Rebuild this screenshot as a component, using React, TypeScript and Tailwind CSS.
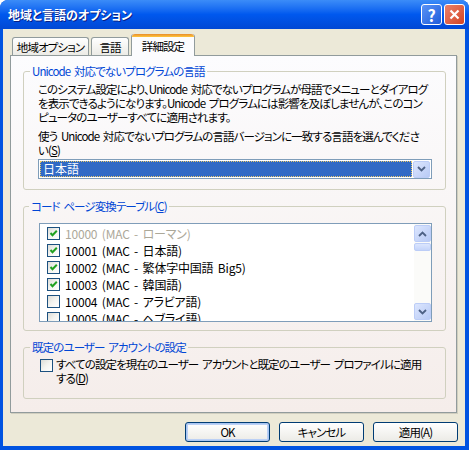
import React from "react";

function XpCheck({ checked }: { checked?: boolean }) {
  return (
    <span className="relative flex h-[13px] w-[13px] shrink-0 border border-[#1C5180] bg-linear-to-br from-[#DCDCD7] via-[#F4F4F0] to-white">
      {checked && (
        <svg viewBox="0 0 11 11" className="absolute left-0 top-0 h-[11px] w-[11px]">
          <path d="M2.5 5 L4.5 7.2 L8.8 2.8" stroke="#21A121" strokeWidth="2" fill="none" />
        </svg>
      )}
    </span>
  );
}

function Chevron({ up }: { up?: boolean }) {
  return (
    <svg viewBox="0 0 9 6" className="h-[6px] w-[9px]">
      <path
        d={up ? "M1 5 L4.5 1.5 L8 5" : "M1 1 L4.5 4.5 L8 1"}
        stroke="#4D6185"
        strokeWidth="1.8"
        fill="none"
      />
    </svg>
  );
}

function ArrowButton({ up }: { up?: boolean }) {
  return (
    <div className="flex h-[17px] w-[17px] shrink-0 items-center justify-center rounded-[2px] border border-[#BCCDF7] bg-linear-to-br from-[#DCE6FE] to-[#B8CAF5]">
      <Chevron up={up} />
    </div>
  );
}

function Tab({ label, w, active }: { label: string; w: string; active?: boolean }) {
  if (active) {
    return (
      <div
        className={`relative z-10 -mb-px flex h-[22px] ${w} flex-col rounded-t-[3px] border-x border-[#919B9C] bg-[#FCFCFE]`}
      >
        <div className="h-[3px] rounded-t-[3px] bg-linear-to-b from-[#E68B2C] to-[#FFC73C]" />
        <div className="flex flex-1 items-center justify-center whitespace-nowrap pb-[1px]">{label}</div>
      </div>
    );
  }
  return (
    <div
      className={`flex h-[18px] ${w} items-center justify-center whitespace-nowrap rounded-t-[3px] border border-b-0 border-[#919B9C] bg-linear-to-b from-white to-[#ECEBE6]`}
    >
      {label}
    </div>
  );
}

function XpButton({ label, def }: { label: string; def?: boolean }) {
  return (
    <button
      className={`h-[20px] w-[85px] rounded-[3px] border border-[#003C74] bg-linear-to-b from-white to-[#ECEBE6] leading-[14px] ${
        def ? "shadow-[inset_0_0_0_1px_#A9C6F2,inset_0_0_0_2px_#BBD0F5]" : ""
      }`}
    >
      {label}
    </button>
  );
}

const codePages = [
  { code: "10000", name: "MAC - ローマン", checked: true, disabled: true },
  { code: "10001", name: "MAC - 日本語", checked: true },
  { code: "10002", name: "MAC - 繁体字中国語 Big5", checked: true },
  { code: "10003", name: "MAC - 韓国語", checked: true },
  { code: "10004", name: "MAC - アラビア語" },
  { code: "10005", name: "MAC - ヘブライ語" },
];

export default function App() {
  return (
    <div className="flex h-[450px] w-[469px] flex-col overflow-hidden rounded-t-[8px] bg-[#0053E1] font-['Noto_Sans_CJK_JP',sans-serif] text-[11.5px] leading-[14px] tracking-[-0.9px] text-black [font-feature-settings:'palt'] [word-spacing:2px]">
      {/* title bar */}
      <div className="flex h-[29px] shrink-0 items-center bg-linear-to-b from-[#3B8CF8] via-[#0058EE] to-[#0148D4] pl-[8px] pr-[4px]">
        <span className="flex-1 text-[12px] font-bold tracking-normal text-white [text-shadow:1px_1px_0_#0A1E82]">
          地域と言語のオプション
        </span>
        <div className="flex gap-[2px]">
          <div className="flex h-[21px] w-[21px] items-center justify-center rounded-[3px] border border-white bg-linear-to-br from-[#5A93F6] to-[#1E5BDA] text-[16px] font-bold leading-none tracking-normal text-white">
            ?
          </div>
          <div className="flex h-[21px] w-[21px] items-center justify-center rounded-[3px] border border-white bg-linear-to-br from-[#E9806A] to-[#D4431F]">
            <svg viewBox="0 0 11 11" className="h-[11px] w-[11px]">
              <path d="M1.5 1.5 L9.5 9.5 M9.5 1.5 L1.5 9.5" stroke="white" strokeWidth="2.2" />
            </svg>
          </div>
        </div>
      </div>

      {/* body */}
      <div className="mb-[4px] ml-[3px] mr-[4px] flex flex-1 flex-col bg-[#ECE9D8] pl-[7px] pr-[8px]">
        <div className="mt-[5px] flex h-[21px] items-end gap-[2px] pl-[2px]">
          <Tab label="地域オプション" w="w-[77px]" />
          <Tab label="言語" w="w-[38px]" />
          <Tab label="詳細設定" w="w-[64px]" active />
        </div>

        <div className="flex h-[358px] flex-col border border-[#919B9C] bg-linear-to-b from-[#FCFCFE] to-[#F5EDEA] pl-[12px] pr-[10px] shadow-[1px_1px_0_#D0CEBF]">
          <fieldset className="mt-[8px] min-w-0 rounded-[3px] border border-[#D0D0BF] pb-[10px] pl-[14px] pr-[13px]">
            <legend className="-ml-[8px] px-[2px] text-[#0046D5]">Unicode 対応でないプログラムの言語</legend>
            <p className="mt-[4px] whitespace-nowrap">
              このシステム設定により、Unicode 対応でないプログラムが母語でメニューとダイアログ
              <br />
              を表示できるようになります。Unicode プログラムには影響を及ぼしませんが、このコン
              <br />
              ピュータのユーザーすべてに適用されます。
            </p>
            <p className="mt-[5px] whitespace-nowrap">
              使う Unicode 対応でないプログラムの言語バージョンに一致する言語を選んでくださ
              <br />
              い(<span className="underline">S</span>)
            </p>
            <div className="mt-[2px] flex h-[20px] items-center border border-[#7F9DB9] bg-white p-[1px]">
              <div className="flex h-full min-w-0 flex-1 items-center border border-dotted border-[#E8C86A] bg-[#316AC5] pl-[2px] text-[12px] tracking-normal text-white">
                日本語
              </div>
              <div className="ml-[1px]">
                <ArrowButton />
              </div>
            </div>
          </fieldset>

          <fieldset className="mt-[9px] min-w-0 rounded-[3px] border border-[#D0D0BF] pb-[8px] pl-[15px] pr-[13px]">
            <legend className="-ml-[10px] px-[2px] text-[#0046D5]">
              コード ページ変換テーブル(<span className="underline">C</span>)
            </legend>
            <div className="mt-[10px] flex h-[99px] border border-[#7F9DB9] bg-white">
              <div className="flex min-w-0 flex-1 flex-col overflow-hidden pl-[7px] pt-[1px]">
                {codePages.map((p) => (
                  <div key={p.code} className="flex h-[17px] shrink-0 items-center gap-[5px]">
                    <XpCheck checked={p.checked} />
                    <span
                      className={`whitespace-nowrap text-[12px] tracking-[-0.2px] ${
                        p.disabled ? "text-[#ACA899]" : ""
                      }`}
                    >
                      {p.code} ({p.name})
                    </span>
                  </div>
                ))}
              </div>
              <div className="flex w-[17px] flex-col bg-[#FBFBF9] py-[1px]">
                <ArrowButton up />
                <div className="mt-[1px] h-[8px] rounded-[2px] border border-[#BCCDF7] bg-linear-to-b from-[#DCE6FE] to-[#C4D4FA]" />
                <div className="flex-1" />
                <ArrowButton />
              </div>
            </div>
          </fieldset>

          <fieldset className="mt-[9px] min-w-0 rounded-[3px] border border-[#D0D0BF] pb-[13px] pl-[16px] pr-[13px]">
            <legend className="-ml-[10px] px-[2px] text-[#0046D5]">既定のユーザー アカウントの設定</legend>
            <div className="mt-[3px] flex items-start gap-[3px]">
              <div className="pt-[2px]">
                <XpCheck />
              </div>
              <span className="whitespace-nowrap">
                すべての設定を現在のユーザー アカウントと既定のユーザー プロファイルに適用
                <br />
                する(<span className="underline">D</span>)
              </span>
            </div>
          </fieldset>
        </div>

        <div className="-mr-px mt-[9px] flex justify-end gap-[9px]">
          <XpButton label="OK" def />
          <XpButton label="キャンセル" />
          <XpButton label="適用(A)" />
        </div>
      </div>
    </div>
  );
}
